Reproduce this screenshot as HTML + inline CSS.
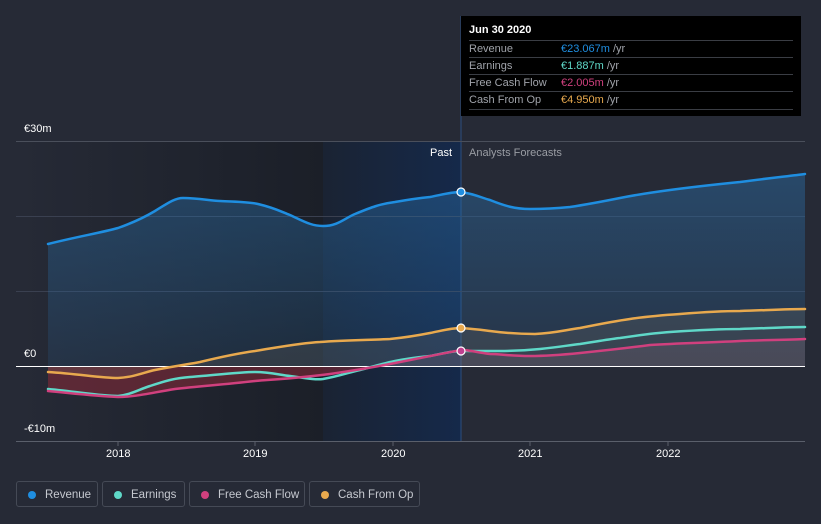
<!DOCTYPE html>
<html><head><meta charset="utf-8"><style>
html,body{margin:0;padding:0;background:#262a36;width:821px;height:524px;overflow:hidden;font-family:"Liberation Sans",sans-serif}
.lbl{position:absolute;color:#fff;font-size:11px}
.tip{position:absolute;left:461px;top:16px;width:340px;height:100px;background:#000}
.tip .h{position:absolute;left:8px;top:8px;color:#fff;font-weight:bold;font-size:11px}
.row{position:absolute;left:8px;width:324px;height:17px;border-top:1px solid #3a3d44;font-size:11px;line-height:16px;color:#a0a3aa}
.row span{position:absolute;left:92px}
.row i{font-style:normal;color:#a0a3aa}
.leg{position:absolute;top:481px;height:26px;border:1px solid #454a56;border-radius:3px;color:#c6c9d0;font-size:11.5px;line-height:26px;box-sizing:border-box}
.leg b{position:absolute;left:11px;top:9px;width:8px;height:8px;border-radius:50%}
</style></head><body>
<svg width="821" height="524" style="position:absolute;left:0;top:0">
<defs>
<linearGradient id="dk" x1="0" x2="1"><stop offset="0" stop-color="#262a36"/><stop offset="1" stop-color="#1b1f28"/></linearGradient>
<linearGradient id="bl" x1="0" x2="1"><stop offset="0" stop-color="#1a2333"/><stop offset="1" stop-color="#15294a"/></linearGradient>
<linearGradient id="rf" x1="0" y1="0" x2="0" y2="1"><stop offset="0" stop-color="#2a6ea8" stop-opacity=".45"/><stop offset="1" stop-color="#2a6ea8" stop-opacity=".15"/></linearGradient>
<clipPath id="neg"><rect x="0" y="366" width="821" height="100"/></clipPath>
<clipPath id="pos"><rect x="0" y="0" width="821" height="366"/></clipPath>
</defs>
<rect x="16" y="141" width="307" height="300" fill="url(#dk)"/>
<rect x="323" y="141" width="138" height="300" fill="url(#bl)"/>
<line x1="461" y1="16" x2="461" y2="441" stroke="#2c4f80" stroke-width="1"/>
<line x1="16" y1="141.5" x2="805" y2="141.5" stroke="#4a4f5b"/>
<line x1="16" y1="216.5" x2="805" y2="216.5" stroke="#3a4050"/>
<line x1="16" y1="291.5" x2="805" y2="291.5" stroke="#3a4050"/>
<path d="M48,244 C80,236 100,233 118,228 C135,222 145,217 155,211 C168,203 175,198 183,198 C200,198 210,201 220,201 C240,202 250,202 258,204 C275,208 282,212 290,215 C305,222 312,226 323,226 C338,226 345,218 355,214 C372,207 380,204 395,202 C412,199 420,198 430,197 C445,194 452,192 461,192 C475,194 482,198 490,200 C505,206 515,209 530,209 C550,209 560,208 570,207 C590,204 605,201 620,198 C640,194 655,192 670,190 C700,186 720,184 740,182 C770,178 790,176 805,174 L805,366 L48,366 Z" fill="url(#rf)"/>
<g clip-path="url(#neg)"><path d="M48,366 L805,366 L805,339 C790,340 760,340 740,341 C700,343 680,343 650,345 C620,349 600,351 580,353 C560,355 545,356 530,356 C510,356 500,354 490,354 C475,352 470,350 461,350 C440,354 420,358 395,363 C370,368 350,371 330,374 C300,378 280,379 255,381 C220,385 200,386 175,389 C150,393 135,397 118,397 C95,396 70,393 48,391 Z" fill="#8a2a38" fill-opacity=".55"/></g>
<g clip-path="url(#pos)"><path d="M48,366 L805,366 L805,339 C790,340 760,340 740,341 C700,343 680,343 650,345 C620,349 600,351 580,353 C560,355 545,356 530,356 C510,356 500,354 490,354 C475,352 470,350 461,350 C440,354 420,358 395,363 C370,368 350,371 330,374 C300,378 280,379 255,381 C220,385 200,386 175,389 C150,393 135,397 118,397 C95,396 70,393 48,391 Z" fill="#8a6a88" fill-opacity=".2"/></g>
<path d="M48,372 C80,374 100,378 118,378 C135,377 145,372 155,370 C175,366 190,364 200,362 C225,356 240,353 255,351 C280,347 300,343 320,342 C345,340 370,340 390,339 C410,337 420,335 430,333 C445,330 452,328 461,328 C475,329 482,330 490,331 C505,333 520,334 535,334 C555,333 565,330 580,328 C600,324 615,321 630,319 C650,316 665,315 680,314 C705,312 725,311 740,311 C770,310 790,309 805,309 L805,366 L48,366Z" fill="#8a8070" fill-opacity=".18"/>
<line x1="16" y1="366.5" x2="805" y2="366.5" stroke="#fff" stroke-width="1"/>
<line x1="16" y1="441.5" x2="805" y2="441.5" stroke="#5a5f6b"/>
<g fill="none" stroke-width="2.5" stroke-linecap="round">
<path stroke="#1f8ee0" d="M48,244 C80,236 100,233 118,228 C135,222 145,217 155,211 C168,203 175,198 183,198 C200,198 210,201 220,201 C240,202 250,202 258,204 C275,208 282,212 290,215 C305,222 312,226 323,226 C338,226 345,218 355,214 C372,207 380,204 395,202 C412,199 420,198 430,197 C445,194 452,192 461,192 C475,194 482,198 490,200 C505,206 515,209 530,209 C550,209 560,208 570,207 C590,204 605,201 620,198 C640,194 655,192 670,190 C700,186 720,184 740,182 C770,178 790,176 805,174"/>
<path stroke="#e8a94e" d="M48,372 C80,374 100,378 118,378 C135,377 145,372 155,370 C175,366 190,364 200,362 C225,356 240,353 255,351 C280,347 300,343 320,342 C345,340 370,340 390,339 C410,337 420,335 430,333 C445,330 452,328 461,328 C475,329 482,330 490,331 C505,333 520,334 535,334 C555,333 565,330 580,328 C600,324 615,321 630,319 C650,316 665,315 680,314 C705,312 725,311 740,311 C770,310 790,309 805,309"/>
<path stroke="#5fd8c8" d="M48,389 C80,392 100,396 118,396 C130,395 140,389 150,386 C165,381 175,378 190,377 C215,375 240,372 255,372 C270,372 280,375 290,376 C305,378 315,380 323,379 C340,376 350,372 360,370 C375,366 385,363 395,361 C410,358 420,357 430,356 C445,353 452,351 461,351 C480,351 490,351 500,351 C520,351 530,350 540,349 C560,347 570,345 580,344 C600,341 610,339 620,338 C640,335 655,333 670,332 C700,330 720,329 740,329 C770,328 790,327 805,327"/>
<path stroke="#d0407e" d="M48,391 C70,393 95,396 118,397 C135,397 150,393 175,389 C200,386 220,385 255,381 C280,379 300,378 330,374 C350,371 370,368 395,363 C420,358 440,354 461,350 C470,350 475,352 490,354 C500,354 510,356 530,356 C545,356 560,355 580,353 C600,351 620,349 650,345 C680,343 700,343 740,341 C760,340 790,340 805,339"/>
</g>
<circle cx="461" cy="192" r="4" fill="#1f8ee0" stroke="#fff" stroke-width="1.2"/>
<circle cx="461" cy="328" r="4" fill="#e8a94e" stroke="#fff" stroke-width="1.2"/>
<circle cx="461" cy="351" r="4" fill="#c04090" stroke="#fff" stroke-width="1.2"/>
<g stroke="#5a5f6b"><line x1="118" y1="441" x2="118" y2="446"/><line x1="255" y1="441" x2="255" y2="446"/><line x1="393" y1="441" x2="393" y2="446"/><line x1="530" y1="441" x2="530" y2="446"/><line x1="668" y1="441" x2="668" y2="446"/></g>
</svg>
<div class="lbl" style="left:24px;top:123px">€30m</div>
<div class="lbl" style="left:24px;top:348px">€0</div>
<div class="lbl" style="left:24px;top:423px">-€10m</div>
<div class="lbl" style="left:430px;top:147px">Past</div>
<div class="lbl" style="left:469px;top:147px;color:#9a9da4">Analysts Forecasts</div>
<div class="lbl" style="left:106px;top:448px">2018</div>
<div class="lbl" style="left:243px;top:448px">2019</div>
<div class="lbl" style="left:381px;top:448px">2020</div>
<div class="lbl" style="left:518px;top:448px">2021</div>
<div class="lbl" style="left:656px;top:448px">2022</div>
<div class="tip">
<div class="h">Jun 30 2020</div>
<div class="row" style="top:24px">Revenue<span><b style="font-weight:normal;color:#1f8ee0">€23.067m</b> <i>/yr</i></span></div>
<div class="row" style="top:41px">Earnings<span><b style="font-weight:normal;color:#5fd8c8">€1.887m</b> <i>/yr</i></span></div>
<div class="row" style="top:58px">Free Cash Flow<span><b style="font-weight:normal;color:#d0407e">€2.005m</b> <i>/yr</i></span></div>
<div class="row" style="top:75px;border-bottom:1px solid #3a3d44">Cash From Op<span><b style="font-weight:normal;color:#e8a94e">€4.950m</b> <i>/yr</i></span></div>
</div>
<div class="leg" style="left:16px;width:82px"><b style="background:#1f8ee0"></b><span style="position:absolute;left:28px">Revenue</span></div>
<div class="leg" style="left:102px;width:83px"><b style="background:#5fd8c8"></b><span style="position:absolute;left:28px">Earnings</span></div>
<div class="leg" style="left:189px;width:116px"><b style="background:#d0407e"></b><span style="position:absolute;left:28px">Free Cash Flow</span></div>
<div class="leg" style="left:309px;width:111px"><b style="background:#e8a94e"></b><span style="position:absolute;left:28px">Cash From Op</span></div>
</body></html>
